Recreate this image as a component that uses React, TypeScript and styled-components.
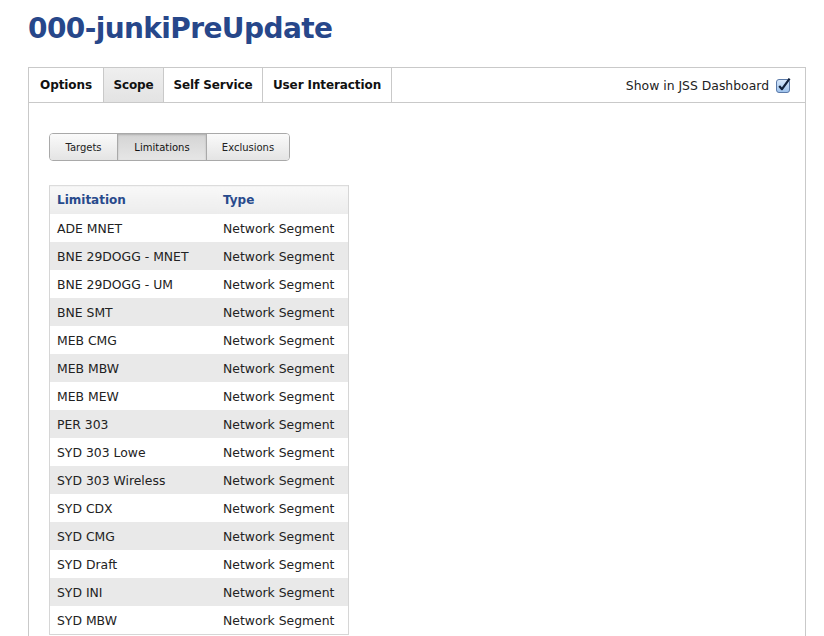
import React, { FC } from 'react';
import styled, { createGlobalStyle } from 'styled-components';

const GlobalStyle = createGlobalStyle`
  html, body {
    margin: 0;
    padding: 0;
    background: #fff;
  }
  body {
    font-family: 'DejaVu Sans', 'Liberation Sans', sans-serif;
    color: #222;
  }
`;

const colors = {
  title: '#27478a',
  header: '#284a8c',
  border: '#c9c9c9',
  rowAlt: '#e9e9e9',
  text: '#222',
};

const Page = styled.div`
  padding: 12px 18px 0 28px;
  height: 636px;
  box-sizing: border-box;
  overflow: hidden;
`;

const Title = styled.h1`
  margin: 0;
  font-size: 28px;
  letter-spacing: -0.6px;
  line-height: 34px;
  font-weight: bold;
  color: ${colors.title};
`;

const Panel = styled.div`
  margin-top: 21px;
  border: 1px solid ${colors.border};
  border-bottom: none;
  height: 600px;
`;

const TabBar = styled.div`
  display: flex;
  align-items: stretch;
  height: 34px;
  border-bottom: 1px solid ${colors.border};
`;

const Tab = styled.div<{ $active?: boolean; $w: number }>`
  display: flex;
  align-items: center;
  justify-content: center;
  width: ${(p) => p.$w}px;
  font-size: 12px;
  letter-spacing: -0.1px;
  font-weight: bold;
  color: #111;
  border-right: 1px solid ${colors.border};
  background: ${(p) => (p.$active ? 'linear-gradient(#efefef, #e3e3e3)' : '#fff')};
`;

const DashboardToggle = styled.label`
  margin-left: auto;
  display: flex;
  align-items: center;
  gap: 7px;
  padding-right: 14px;
  font-size: 12.4px;
  color: #222;
`;

const Content = styled.div`
  padding: 30px 20px 0 20px;
`;

const SubTabs = styled.div`
  display: inline-flex;
  height: 28px;
  border: 1px solid #a9a9a9;
  border-radius: 4px;
  overflow: hidden;
  box-sizing: border-box;
`;

const SubTab = styled.div<{ $active?: boolean; $w: number }>`
  display: flex;
  align-items: center;
  justify-content: center;
  width: ${(p) => p.$w}px;
  font-size: 10px;
  color: ${(p) => (p.$active ? '#111' : '#222')};
  background: ${(p) =>
    p.$active ? 'linear-gradient(#d4d4d4, #e6e6e6)' : 'linear-gradient(#fafafa, #e4e4e4)'};
  box-shadow: ${(p) => (p.$active ? 'inset 0 1px 2px rgba(0,0,0,0.18)' : 'none')};
  & + & {
    border-left: 1px solid #a9a9a9;
  }
`;

const Table = styled.table`
  margin-top: 24px;
  width: 300px;
  border-collapse: collapse;
  border: 1px solid #d6d6d6;
  border-top-color: #dcdcdc;
  font-size: 12.4px;
`;

const HeadCell = styled.th<{ $w?: number }>`
  text-align: left;
  height: 28px;
  width: ${(p) => (p.$w ? `${p.$w}px` : 'auto')};
  padding: 0 7px;
  color: ${colors.header};
  font-weight: bold;
  font-size: 12px;
  background: linear-gradient(#f8f8f8, #ececec);
`;

const Row = styled.tr<{ $alt: boolean }>`
  background: ${(p) => (p.$alt ? colors.rowAlt : '#fff')};
`;

const Cell = styled.td`
  height: 28px;
  padding: 0 7px;
  color: ${colors.text};
  white-space: nowrap;
`;

const CheckBox: FC = () => (
  <svg width="15" height="15" viewBox="0 0 15 15">
    <defs>
      <linearGradient id="cb" x1="0" y1="0" x2="0" y2="1">
        <stop offset="0" stopColor="#d9e9fb" />
        <stop offset="1" stopColor="#9cc1ec" />
      </linearGradient>
    </defs>
    <rect x="0.5" y="1.5" width="13" height="13" rx="2.5" fill="url(#cb)" stroke="#5b7aa8" />
    <path d="M3.2 8 L6 11.2 L13.6 0.6" fill="none" stroke="#10203a" strokeWidth="2.2" strokeLinejoin="round" />
  </svg>
);

const tabs = [
  { label: 'Options', w: 74 },
  { label: 'Scope', w: 59, active: true },
  { label: 'Self Service', w: 98 },
  { label: 'User Interaction', w: 128 },
];

const subTabs = [
  { label: 'Targets', w: 67 },
  { label: 'Limitations', w: 88, active: true },
  { label: 'Exclusions', w: 82 },
];

const limitations = [
  'ADE MNET',
  'BNE 29DOGG - MNET',
  'BNE 29DOGG - UM',
  'BNE SMT',
  'MEB CMG',
  'MEB MBW',
  'MEB MEW',
  'PER 303',
  'SYD 303 Lowe',
  'SYD 303 Wireless',
  'SYD CDX',
  'SYD CMG',
  'SYD Draft',
  'SYD INI',
  'SYD MBW',
];

const App: FC = () => {
  return (
    <Page>
      <GlobalStyle />
      <Title>000-junkiPreUpdate</Title>
      <Panel>
        <TabBar>
          {tabs.map((t) => (
            <Tab key={t.label} $active={t.active} $w={t.w}>
              {t.label}
            </Tab>
          ))}
          <DashboardToggle>
            Show in JSS Dashboard
            <CheckBox />
          </DashboardToggle>
        </TabBar>
        <Content>
          <SubTabs>
            {subTabs.map((s) => (
              <SubTab key={s.label} $active={s.active} $w={s.w}>
                {s.label}
              </SubTab>
            ))}
          </SubTabs>
          <Table>
            <thead>
              <tr>
                <HeadCell $w={152}>Limitation</HeadCell>
                <HeadCell>Type</HeadCell>
              </tr>
            </thead>
            <tbody>
              {limitations.map((name, i) => (
                <Row key={name} $alt={i % 2 === 1}>
                  <Cell>{name}</Cell>
                  <Cell>Network Segment</Cell>
                </Row>
              ))}
            </tbody>
          </Table>
        </Content>
      </Panel>
    </Page>
  );
};

export default App;
